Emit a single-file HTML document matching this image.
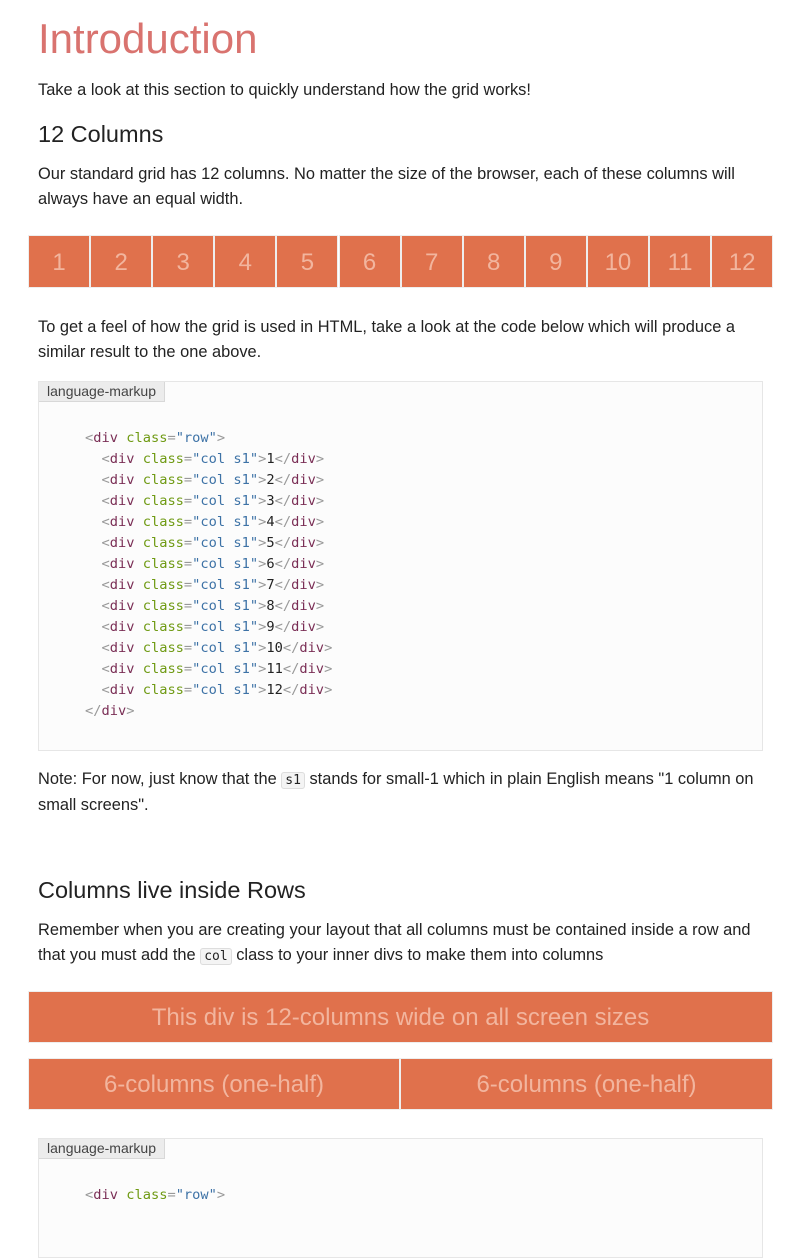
<!DOCTYPE html>
<html><head><meta charset="utf-8"><style>
body{margin:0;width:796px;height:1201px;overflow:hidden;background:#fff;font-family:"Liberation Sans",sans-serif;color:#222;position:relative}
.a{position:absolute}
p{margin:0;font-size:16.4px;line-height:25px}
h1{margin:0;font-weight:300;font-size:42px;color:#d9736f;line-height:50px}
h2{margin:0;font-weight:400;font-size:23.5px;line-height:30px}
.box{position:absolute;background:#e0714c;color:#f2b59e;font-weight:300;text-align:center;border:1px solid #eee;box-sizing:border-box}
.code{position:absolute;left:38px;width:725px;background:#fcfcfc;border:1px solid #e6e6e6;box-sizing:border-box}
.lbl{position:absolute;left:0;top:0;width:126px;height:20px;background:#ececec;border:1px solid #d8d8d8;box-sizing:border-box;font-size:14px;line-height:18px;color:#444;text-align:center;border-top:none;border-left:none}
pre{margin:0;position:absolute;left:46px;font-family:"DejaVu Sans Mono","Liberation Mono",monospace;font-size:13.7px;line-height:21px;color:#222}
.t{color:#7a2e55}.p{color:#999}.k{color:#6f9a13}.s{color:#3d72a6}
code.i{font-family:"DejaVu Sans Mono",monospace;font-size:13px;background:#f4f4f4;border:1px solid #ddd;border-radius:3px;padding:0 3px}
</style></head><body>
<h1 class="a" style="left:38px;top:14px">Introduction</h1>
<p class="a" style="left:38px;top:78px">Take a look at this section to quickly understand how the grid works!</p>
<h2 class="a" style="left:38px;top:119px">12 Columns</h2>
<p class="a" style="left:38px;top:162px;width:730px">Our standard grid has 12 columns. No matter the size of the browser, each of these columns will always have an equal width.</p>
<div id="g"></div>
<p class="a" style="left:38px;top:315px;width:730px">To get a feel of how the grid is used in HTML, take a look at the code below which will produce a similar result to the one above.</p>
<div class="code" style="top:381px;height:370px"><div class="lbl">language-markup</div>
<pre style="top:46px"><span class="p">&lt;</span><span class="t">div</span> <span class="k">class</span><span class="p">=</span><span class="s">"row"</span><span class="p">&gt;</span>
  <span class="p">&lt;</span><span class="t">div</span> <span class="k">class</span><span class="p">=</span><span class="s">"col s1"</span><span class="p">&gt;</span>1<span class="p">&lt;/</span><span class="t">div</span><span class="p">&gt;</span>
  <span class="p">&lt;</span><span class="t">div</span> <span class="k">class</span><span class="p">=</span><span class="s">"col s1"</span><span class="p">&gt;</span>2<span class="p">&lt;/</span><span class="t">div</span><span class="p">&gt;</span>
  <span class="p">&lt;</span><span class="t">div</span> <span class="k">class</span><span class="p">=</span><span class="s">"col s1"</span><span class="p">&gt;</span>3<span class="p">&lt;/</span><span class="t">div</span><span class="p">&gt;</span>
  <span class="p">&lt;</span><span class="t">div</span> <span class="k">class</span><span class="p">=</span><span class="s">"col s1"</span><span class="p">&gt;</span>4<span class="p">&lt;/</span><span class="t">div</span><span class="p">&gt;</span>
  <span class="p">&lt;</span><span class="t">div</span> <span class="k">class</span><span class="p">=</span><span class="s">"col s1"</span><span class="p">&gt;</span>5<span class="p">&lt;/</span><span class="t">div</span><span class="p">&gt;</span>
  <span class="p">&lt;</span><span class="t">div</span> <span class="k">class</span><span class="p">=</span><span class="s">"col s1"</span><span class="p">&gt;</span>6<span class="p">&lt;/</span><span class="t">div</span><span class="p">&gt;</span>
  <span class="p">&lt;</span><span class="t">div</span> <span class="k">class</span><span class="p">=</span><span class="s">"col s1"</span><span class="p">&gt;</span>7<span class="p">&lt;/</span><span class="t">div</span><span class="p">&gt;</span>
  <span class="p">&lt;</span><span class="t">div</span> <span class="k">class</span><span class="p">=</span><span class="s">"col s1"</span><span class="p">&gt;</span>8<span class="p">&lt;/</span><span class="t">div</span><span class="p">&gt;</span>
  <span class="p">&lt;</span><span class="t">div</span> <span class="k">class</span><span class="p">=</span><span class="s">"col s1"</span><span class="p">&gt;</span>9<span class="p">&lt;/</span><span class="t">div</span><span class="p">&gt;</span>
  <span class="p">&lt;</span><span class="t">div</span> <span class="k">class</span><span class="p">=</span><span class="s">"col s1"</span><span class="p">&gt;</span>10<span class="p">&lt;/</span><span class="t">div</span><span class="p">&gt;</span>
  <span class="p">&lt;</span><span class="t">div</span> <span class="k">class</span><span class="p">=</span><span class="s">"col s1"</span><span class="p">&gt;</span>11<span class="p">&lt;/</span><span class="t">div</span><span class="p">&gt;</span>
  <span class="p">&lt;</span><span class="t">div</span> <span class="k">class</span><span class="p">=</span><span class="s">"col s1"</span><span class="p">&gt;</span>12<span class="p">&lt;/</span><span class="t">div</span><span class="p">&gt;</span>
<span class="p">&lt;/</span><span class="t">div</span><span class="p">&gt;</span></pre></div>
<p class="a" style="left:38px;top:767px;width:730px">Note: For now, just know that the <code class="i">s1</code> stands for small-1 which in plain English means "1 column on small screens".</p>
<h2 class="a" style="left:38px;top:875px">Columns live inside Rows</h2>
<p class="a" style="left:38px;top:918px;width:722px">Remember when you are creating your layout that all columns must be contained inside a row and that you must add the <code class="i">col</code> class to your inner divs to make them into columns</p>
<div class="box" style="left:28px;top:991px;width:745px;height:52px;font-size:24px;line-height:52px">This div is 12-columns wide on all screen sizes</div>
<div class="box" style="left:28px;top:1058px;width:372px;height:52px;font-size:24px;line-height:52px">6-columns (one-half)</div>
<div class="box" style="left:400px;top:1058px;width:373px;height:52px;font-size:24px;line-height:52px">6-columns (one-half)</div>
<div class="code" style="top:1138px;height:120px"><div class="lbl">language-markup</div>
<pre style="top:46px"><span class="p">&lt;</span><span class="t">div</span> <span class="k">class</span><span class="p">=</span><span class="s">"row"</span><span class="p">&gt;</span></pre></div>
<script>
var g=document.getElementById('g'),h='';
for(var i=0;i<12;i++){var l=28+i*62.1;h+='<div class="box" style="left:'+l.toFixed(1)+'px;top:235px;width:62.1px;height:53px;font-size:24px;line-height:53px">'+(i+1)+'</div>';}
g.innerHTML=h;
</script>
</body></html>
